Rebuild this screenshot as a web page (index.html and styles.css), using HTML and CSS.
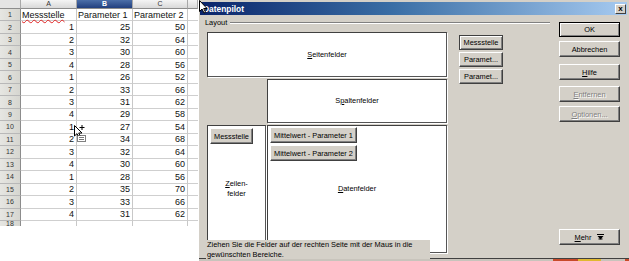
FILE: index.html
```html
<!DOCTYPE html>
<html>
<head>
<meta charset="utf-8">
<link rel="stylesheet" href="styles.css">
</head>
<body>
<div class="screen">
  <div class="sheet">
    <div class="grid">
      <div class="hd corner"></div><div class="hd">A</div><div class="hd sel">B</div><div class="hd">C</div><div class="hd"></div>
      <div class="rh">1</div><div class="c t"><span class="spell">Messstelle</span></div><div class="c t">Parameter 1</div><div class="c t">Parameter 2</div><div class="c e"></div>
      <div class="rh">2</div><div class="c">1</div><div class="c">25</div><div class="c">50</div><div class="c e"></div>
      <div class="rh">3</div><div class="c">2</div><div class="c">32</div><div class="c">64</div><div class="c e"></div>
      <div class="rh">4</div><div class="c">3</div><div class="c">30</div><div class="c">60</div><div class="c e"></div>
      <div class="rh">5</div><div class="c">4</div><div class="c">28</div><div class="c">56</div><div class="c e"></div>
      <div class="rh">6</div><div class="c">1</div><div class="c">26</div><div class="c">52</div><div class="c e"></div>
      <div class="rh">7</div><div class="c">2</div><div class="c">33</div><div class="c">66</div><div class="c e"></div>
      <div class="rh">8</div><div class="c">3</div><div class="c">31</div><div class="c">62</div><div class="c e"></div>
      <div class="rh">9</div><div class="c">4</div><div class="c">29</div><div class="c">58</div><div class="c e"></div>
      <div class="rh">10</div><div class="c">1</div><div class="c">27</div><div class="c">54</div><div class="c e"></div>
      <div class="rh">11</div><div class="c">2</div><div class="c">34</div><div class="c">68</div><div class="c e"></div>
      <div class="rh">12</div><div class="c">3</div><div class="c">32</div><div class="c">64</div><div class="c e"></div>
      <div class="rh">13</div><div class="c">4</div><div class="c">30</div><div class="c">60</div><div class="c e"></div>
      <div class="rh">14</div><div class="c">1</div><div class="c">28</div><div class="c">56</div><div class="c e"></div>
      <div class="rh">15</div><div class="c">2</div><div class="c">35</div><div class="c">70</div><div class="c e"></div>
      <div class="rh">16</div><div class="c">3</div><div class="c">33</div><div class="c">66</div><div class="c e"></div>
      <div class="rh">17</div><div class="c">4</div><div class="c">31</div><div class="c">62</div><div class="c e"></div>
      <div class="rh last">18</div><div class="c last"></div><div class="c last"></div><div class="c last"></div><div class="c e last"></div>
    </div>
    <svg class="dragcur" width="14" height="19" viewBox="0 0 14 19">
      <path d="M1.5 1.5 L1.5 12 L4 9.6 L6 13.5 L7.6 12.8 L5.7 9 L9 9 Z" fill="#fff" stroke="#000" stroke-width="1"/>
      <path d="M9 1 V6 M6.5 3.5 H11.5" stroke="#000" stroke-width="1"/>
      <rect x="4.5" y="11.5" width="8" height="6" fill="#fff" stroke="#000" stroke-width="1" stroke-dasharray="1 1"/>
      <path d="M6 13.5 H11 M6 15.5 H11" stroke="#555" stroke-width="0.8"/>
    </svg>
  </div>

  <div class="dialog">
    <div class="titlebar">
      <span class="title">Datenpilot</span>
      <span class="close">x</span>
    </div>
    <svg class="titlecur" width="10" height="14" viewBox="0 0 10 14">
      <path d="M0.5 0.5 L0.5 11.5 L3 9 L5 13 L6.6 12.3 L4.7 8.5 L8 8.5 Z" fill="#fff" stroke="#000" stroke-width="1"/>
    </svg>
    <div class="dbody">
      <div class="layout">
        <div class="legend"><span>Layout</span><div class="rule"></div></div>
        <div class="area">
          <div class="box seiten"><span class="lbl"><u>S</u>eitenfelder</span></div>
          <div class="fields">
            <div class="btn fbtn focus">Messstelle</div>
            <div class="btn fbtn">Paramet...</div>
            <div class="btn fbtn">Paramet...</div>
          </div>
          <div class="box spalten"><span class="lbl">S<u>p</u>altenfelder</span></div>
          <div class="box zeilen">
            <div class="btn zbtn">Messstelle</div>
            <span class="lbl"><u>Z</u>eilen-<br>felder</span>
          </div>
          <div class="box daten">
            <div class="dbtns">
              <div class="btn dbtn">Mittelwert - Parameter 1</div>
              <div class="btn dbtn">Mittelwert - Parameter 2</div>
            </div>
            <span class="lbl"><u>D</u>atenfelder</span>
          </div>
          <div class="hint">Ziehen Sie die Felder auf der rechten Seite mit der Maus in die gewünschten Bereiche.</div>
        </div>
      </div>
      <div class="cmds">
        <div class="btn cbtn default">OK</div>
        <div class="btn cbtn g3">Abbrechen</div>
        <div class="btn cbtn g7"><u>H</u>ilfe</div>
        <div class="btn cbtn g6 dis"><u>E</u>ntfernen</div>
        <div class="btn cbtn g4 dis"><u>O</u>ptionen...</div>
        <div class="btn cbtn more"><span><u>M</u>ehr</span>
          <svg width="7" height="7" viewBox="0 0 7 7"><path d="M0 0.5 H7" stroke="#000" stroke-width="1"/><path d="M0.5 2 H6.5 L3.5 5.5 Z" fill="#000"/><path d="M1.5 5 H5.5" stroke="#000" stroke-width="1"/></svg>
        </div>
      </div>
    </div>
    <div class="framebottom"></div>
    <div class="under"><span class="seg red"></span><span class="seg yel"></span><span class="seg gry"></span><span class="seg red2"></span></div>
  </div>
</div>
</body>
</html>
```

FILE: styles.css
```css
html, body {
  margin: 0;
  padding: 0;
}
body {
  width: 629px;
  height: 261px;
  overflow: hidden;
  background: #fff;
  font-family: "Liberation Sans", Arial, sans-serif;
}
.screen {
  display: flex;
  height: 261px;
}

/* ---------- spreadsheet ---------- */
.sheet {
  width: 198px;
  flex: none;
  position: relative;
  background: #fff;
}
.grid {
  display: grid;
  grid-template-columns: 21px 56px 56px 55px 10px;
  grid-template-rows: 9px repeat(17, 12.47px) 5px;
}
.hd {
  background: linear-gradient(#f4f4f4, #d9d9d9);
  border-right: 1px solid #a8a8a8;
  border-bottom: 1px solid #8c8c8c;
  box-sizing: border-box;
  font-size: 7px;
  line-height: 8px;
  text-align: center;
  color: #333;
}
.hd.corner {
  background: #e4e4e4;
}
.hd.sel {
  background: linear-gradient(#4b6ea8, #213f7e);
  color: #fff;
  font-weight: bold;
}
.rh {
  background: linear-gradient(90deg, #e6e6e2, #d6d6d0);
  border-right: 1px solid #8c8c8c;
  border-bottom: 1px solid #b8b8b8;
  box-sizing: border-box;
  font-size: 7px;
  text-align: center;
  color: #333;
  display: flex;
  align-items: center;
  justify-content: center;
}
.c {
  border-right: 1px solid #c8c8c8;
  border-bottom: 1px solid #cfcfcf;
  box-sizing: border-box;
  font-size: 9px;
  color: #111;
  text-align: right;
  padding-right: 2px;
  display: flex;
  align-items: center;
  justify-content: flex-end;
  overflow: hidden;
  white-space: nowrap;
}
.c.t {
  justify-content: flex-start;
  padding-left: 1px;
  padding-right: 0;
  overflow: visible;
}
.c.e {
  border-right: none;
}
.c.last, .rh.last {
  border-bottom: none;
}
.spell {
  text-decoration-line: underline;
  text-decoration-style: wavy;
  text-decoration-color: #e02020;
  text-decoration-thickness: 1px;
  text-underline-offset: 1px;
}
.dragcur {
  position: absolute;
  left: 73px;
  top: 124px;
}

/* ---------- dialog ---------- */
.dialog {
  width: 431px;
  flex: none;
  background: #d4d0c8;
  border-left: 1px solid #ffffff;
  box-sizing: border-box;
  display: flex;
  flex-direction: column;
  position: relative;
  font-family: "Liberation Sans", Arial, sans-serif;
  font-size: 7.4px;
  color: #000;
}
.titlebar {
  height: 13px;
  margin: 2px 2px 0 1px;
  background: linear-gradient(90deg, #0a246a, #3a6ea5 45%, #a6caf0);
  display: flex;
  align-items: center;
  justify-content: space-between;
  padding-left: 3px;
}
.title {
  color: #fff;
  font-weight: bold;
  font-size: 8.4px;
}
.close {
  width: 11px;
  height: 10px;
  box-sizing: border-box;
  background: #d4d0c8;
  border: 1px solid;
  border-color: #fff #404040 #404040 #fff;
  font-size: 8px;
  font-weight: bold;
  line-height: 7px;
  text-align: center;
  margin-right: 1px;
}
.titlecur {
  position: absolute;
  left: 0;
  top: 0;
}
.dbody {
  flex: 1;
  display: flex;
  padding-left: 6px;
}
.layout {
  width: 345px;
  flex: none;
}
.legend {
  display: flex;
  align-items: center;
  margin-top: 3px;
  height: 9px;
}
.legend span {
  padding-right: 3px;
}
.rule {
  flex: 1;
  border-top: 1px solid #808080;
  border-bottom: 1px solid #fff;
  margin-top: 1px;
}
.area {
  position: relative;
  margin-top: 5px;
  margin-left: 2px;
  display: grid;
  grid-template-columns: 59px 180px 44px;
  grid-template-rows: 45px 44px 128px;
  column-gap: 1px;
  row-gap: 2px;
}
.box {
  background: #fff;
  border: 1px solid;
  border-color: #404040 #555 #555 #404040;
  box-shadow: 1px 1px 0 #fff;
  box-sizing: border-box;
  display: grid;
}
.box > * {
  grid-area: 1 / 1;
}
.lbl {
  align-self: center;
  justify-self: center;
  text-align: center;
  line-height: 10px;
}
.seiten {
  grid-column: 1 / 3;
  grid-row: 1;
}
.spalten {
  grid-column: 2;
  grid-row: 2;
}
.zeilen {
  grid-column: 1;
  grid-row: 3;
}
.daten {
  grid-column: 2;
  grid-row: 3;
}
.fields {
  grid-column: 3;
  grid-row: 1 / 4;
  margin-left: 11px;
  padding-top: 3px;
  display: flex;
  flex-direction: column;
  gap: 2px;
}
.btn {
  background: #d4d0c8;
  border: 1px solid;
  border-color: #fff #404040 #404040 #fff;
  box-shadow: inset -1px -1px 0 #808080;
  box-sizing: border-box;
  display: flex;
  align-items: center;
  justify-content: center;
  white-space: nowrap;
}
.fbtn {
  width: 44px;
  height: 15px;
}
.fbtn.focus {
  border-color: #404040;
  box-shadow: inset 1px 1px 0 #fff, inset -1px -1px 0 #808080;
}
.zbtn {
  align-self: start;
  justify-self: start;
  width: 43px;
  height: 16px;
  margin: 2px 0 0 2px;
}
.dbtns {
  align-self: start;
  justify-self: start;
  margin: 1px 0 0 2px;
  display: flex;
  flex-direction: column;
  gap: 2px;
}
.dbtn {
  width: 87px;
  height: 16px;
}
.hint {
  position: absolute;
  left: -1px;
  top: 208px;
  width: 224px;
  height: 19px;
  background: #d4d0c8;
  line-height: 9.5px;
  padding-left: 1px;
  box-sizing: border-box;
}
.cmds {
  margin-left: 9px;
  padding-top: 7px;
  width: 61px;
  display: flex;
  flex-direction: column;
}
.cbtn {
  height: 16px;
}
.cbtn.default {
  height: 15px;
  border-color: #000;
  box-shadow: inset 1px 1px 0 #fff, inset -1px -1px 0 #808080;
}
.g3 { margin-top: 4px; }
.g7 { margin-top: 7px; }
.g6 { margin-top: 6px; }
.g4 { margin-top: 4px; }
.dis {
  color: #808080;
  text-shadow: 1px 1px 0 #fff;
}
.more {
  margin-top: 107px;
  gap: 6px;
}
.framebottom {
  height: 1px;
  background: #404040;
}
.under {
  height: 2px;
  background: #c8c4bc;
  display: flex;
}
.seg { height: 2px; }
.seg.red { margin-left: 354px; width: 25px; background: #c84a2a; }
.seg.yel { width: 23px; background: #e0b830; }
.seg.gry { width: 24px; background: #c8c4bc; }
.seg.red2 { width: 4px; background: #c84a2a; }
```
